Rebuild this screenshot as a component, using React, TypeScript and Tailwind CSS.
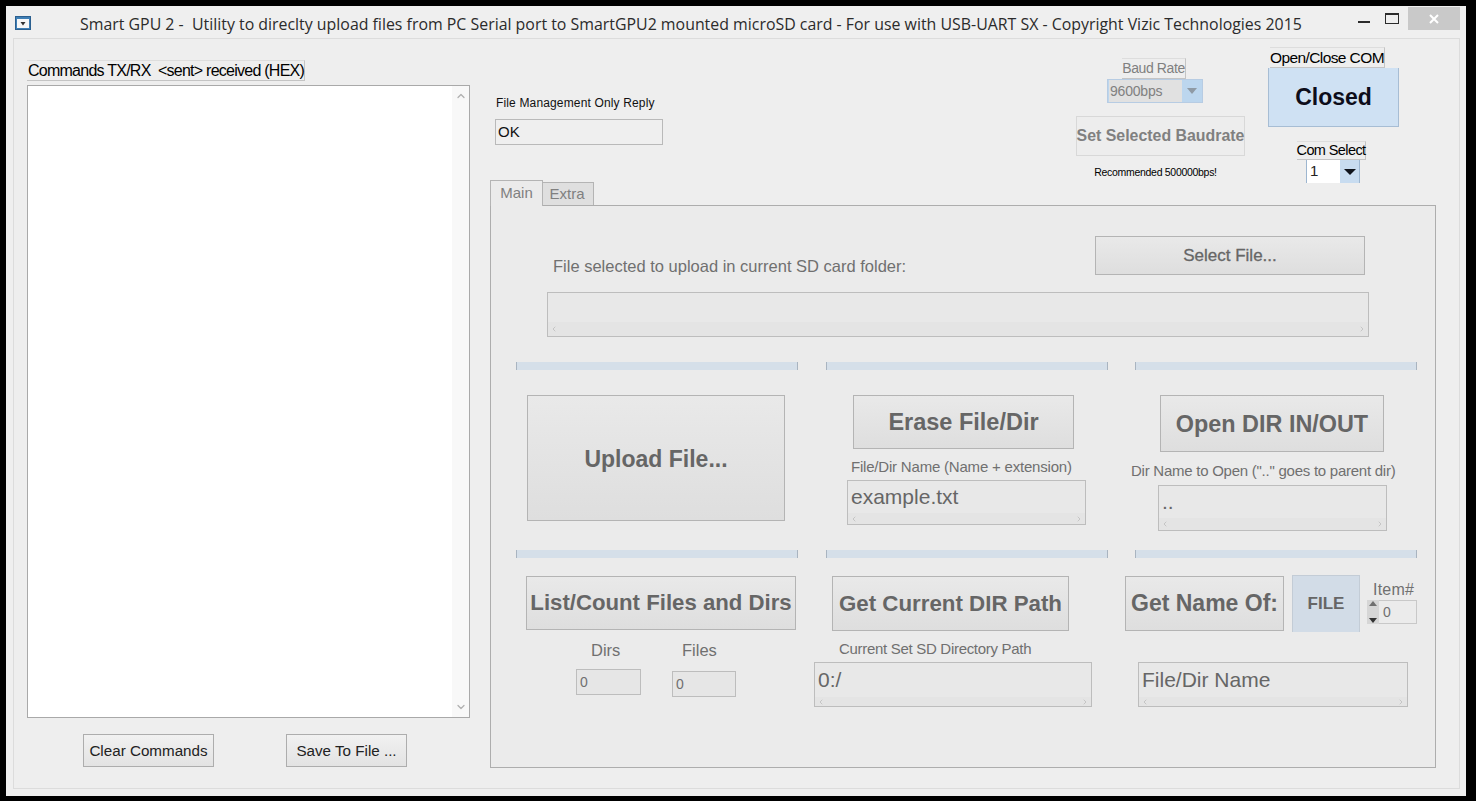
import React from "react";
import { ChevronLeft, ChevronRight, ChevronUp, ChevronDown } from "lucide-react";

const FONT = "font-['Liberation_Sans',Arial,sans-serif]";

function Btn({ className, children }: { className: string; children: React.ReactNode }) {
  return (
    <div className={`flex items-center justify-center whitespace-nowrap font-bold text-[#666666] border border-[#b4b4b4] bg-gradient-to-b from-[#e9e9e9] to-[#dedede] ${className}`}>
      {children}
    </div>
  );
}

function ScrollBox({ className, textClass, text }: { className: string; textClass: string; text?: string }) {
  return (
    <div className={`flex flex-col border border-[#bdbdbd] bg-[#e8e8e8] ${className}`}>
      <div className={`flex-1 px-[3px] whitespace-nowrap text-[#666666] ${textClass}`}>{text}</div>
      <div className="flex h-[14px] items-center justify-between bg-[#e4e4e4] px-[2px] text-[#b5b5b5]">
        <ChevronLeft size={8} strokeWidth={2} />
        <ChevronRight size={8} strokeWidth={2} />
      </div>
    </div>
  );
}

function Separator() {
  return <div className="h-[8px] w-[282px] border-x border-[#a9b4c0] bg-[#d5dfe9]" />;
}

function Tag({ className, children }: { className: string; children: React.ReactNode }) {
  return (
    <div className={`flex items-center justify-center whitespace-nowrap border-t border-t-[#dddddd] border-r border-b border-[#c4c4c4] text-black ${className}`}>
      {children}
    </div>
  );
}

export default function App() {
  return (
    <div className={`h-[801px] w-[1476px] overflow-hidden bg-black pl-[6px] pt-[6px] ${FONT}`}>
      <div className="h-[790px] w-[1460px] bg-[#efefef]">
        {/* Title bar */}
        <div className="flex h-[32px] items-start">
          <svg className="ml-[9px] mt-[10px]" width="16" height="14" viewBox="0 0 16 14">
            <rect x="0.5" y="0.5" width="15" height="13" fill="#3f7fb5" stroke="#2b5f8f" />
            <rect x="2" y="3" width="12" height="9" fill="#f7f7f7" />
            <path d="M5.5 6 L10.5 6 L8 9.5 Z" fill="#333333" />
          </svg>
          <div className="ml-[49px] mt-[8px] whitespace-nowrap font-['Open_Sans',sans-serif] text-[15.9px] leading-[20px] text-[#2b2b2b]">
            Smart GPU 2 -&nbsp; Utility to direclty upload files from PC Serial port to SmartGPU2 mounted microSD card - For use with USB-UART SX - Copyright Vizic Technologies 2015
          </div>
          <div className="ml-auto flex items-start">
            <div className="mt-[15px] h-[2px] w-[12px] bg-[#2b2b2b]" />
            <div className="ml-[15px] mt-[7px] h-[11px] w-[14px] border border-t-2 border-[#2b2b2b]" />
            <div className="ml-[9px] mt-[1px] flex h-[23px] w-[52px] items-center justify-center bg-[#c9c9c9]">
              <svg width="10" height="10" viewBox="0 0 10 10">
                <path d="M1 1 L9 9 M9 1 L1 9" stroke="#ffffff" strokeWidth="2" />
              </svg>
            </div>
            <div className="w-[6px]" />
          </div>
        </div>

        {/* Form */}
        <div className="ml-[7px] flex h-[751px] w-[1447px] border border-[#dcdcdc] bg-[#eeeeee]">
          {/* Commands column */}
          <div className="ml-[13px] w-[443px]">
            <Tag className="mt-[21px] h-[21px] w-[278px] justify-start pt-[1px] pl-[1px] text-[16px] tracking-[-0.75px]">
              Commands TX/RX&nbsp; &lt;sent&gt; received (HEX)
            </Tag>
            <div className="mt-[4px] flex h-[633px] justify-end border border-[#a9a9a9] bg-white">
              <div className="flex w-[17px] flex-col items-center justify-between bg-[#f8f8f8] py-[4px] text-[#b0b0b0]">
                <ChevronUp size={12} strokeWidth={2.5} />
                <ChevronDown size={12} strokeWidth={2.5} />
              </div>
            </div>
            <div className="mt-[16px] flex pl-[56px] text-[15.2px] text-[#222222]">
              <div className="flex h-[33px] w-[131px] items-center justify-center border border-[#adadad] bg-gradient-to-b from-[#f1f1f1] to-[#e3e3e3] pt-[2px]">Clear Commands</div>
              <div className="ml-[72px] flex h-[33px] w-[121px] items-center justify-center border border-[#adadad] bg-gradient-to-b from-[#f1f1f1] to-[#e3e3e3] pt-[2px]">Save To File ...</div>
            </div>
          </div>

          {/* Right side */}
          <div className="ml-[20px] w-[946px]">
            <div className="flex h-[141px]">
              <div className="ml-[5px] w-[168px] pt-[56px]">
                <div className="ml-[1px] whitespace-nowrap text-[12px] leading-[16px] tracking-[0.15px] text-[#111111]">File Management Only Reply</div>
                <div className="mt-[8px] flex h-[26px] items-center border border-[#b9b9b9] bg-[#efefef] px-[2px] text-[15px] text-[#111111]">OK</div>
              </div>

              <div className="ml-[413px] flex w-[169px] flex-col pt-[19px]">
                <Tag className="ml-[46px] h-[21px] w-[64px] text-[14px] tracking-[-0.4px] !text-[#808080]">Baud Rate</Tag>
                <div className="ml-[31px] flex h-[24px] w-[96px] items-center border border-[#b7cce3] bg-[#bcd6ee] pl-[1px]">
                  <div className="flex h-full flex-1 items-center bg-[#e1e1e1] pl-[1px] text-[14px] tracking-[-0.2px] text-[#808080]">9600bps</div>
                  <svg className="mx-[5px]" width="10" height="6" viewBox="0 0 10 6"><path d="M0 0 L10 0 L5 6 Z" fill="#8f9aa5" /></svg>
                </div>
                <Btn className="mt-[13px] h-[40px] w-[169px] !border-[#d8d8d8] !bg-none bg-[#ededed] text-[15.9px] !text-[#808080]">Set Selected Baudrate</Btn>
                <div className="mt-[9px] whitespace-nowrap pr-[10px] text-center text-[10.5px] leading-[14px] tracking-[-0.3px] text-black">Recommended 500000bps!</div>
              </div>

              <div className="ml-[23px] w-[131px] pt-[8px]">
                <Tag className="ml-[2px] h-[21px] w-[115px] text-[15.5px] tracking-[-0.6px]">Open/Close COM</Tag>
                <div className="flex h-[59px] items-center justify-center border-x border-b border-[#a7bdd4] bg-[#cfe1f3] text-[23px] font-bold text-[#0d0d1a]">Closed</div>
                <Tag className="ml-[29px] mt-[14px] h-[19px] w-[69px] text-[14.5px] tracking-[-0.6px]">Com Select</Tag>
                <div className="ml-[38px] flex h-[23px] w-[54px] items-center border-x border-[#9db6d0] bg-[#c8dcf0]">
                  <div className="flex h-full w-[33px] items-center bg-white pl-[3px] text-[15px] text-[#222222]">1</div>
                  <svg className="ml-[4px]" width="12" height="6" viewBox="0 0 12 6"><path d="M0 0 L12 0 L6 6 Z" fill="#10141c" /></svg>
                </div>
              </div>
            </div>

            {/* Tabs */}
            <div className="flex h-[25px] items-end text-[15px] text-[#808080]">
              <div className="relative z-10 -mb-[1px] flex h-[26px] w-[53px] items-center justify-center border border-b-0 border-[#b4b4b4] bg-[#ebebeb]">Main</div>
              <div className="flex h-[23px] w-[51px] items-center justify-center border border-l-0 border-b-0 border-[#b4b4b4] bg-[#dfdfdf] pr-[2px]">Extra</div>
            </div>

            <div className="h-[563px] border border-[#adadad] bg-[#ebebeb]">
              <div className="flex h-[69px] items-start pt-[30px]">
                <div className="ml-[62px] mt-[21px] w-[353px] whitespace-nowrap text-[16.5px] leading-[18px] text-[#707070]">File selected to upload in current SD card folder:</div>
                <Btn className="ml-[189px] h-[39px] w-[270px] text-[17px] !font-normal [-webkit-text-stroke:0.3px_#666666]">Select File...</Btn>
              </div>
              <ScrollBox className="ml-[56px] mt-[17px] h-[45px] w-[822px]" textClass="" />

              <div className="ml-[25px] mt-[25px] flex">
                {/* Upload / List */}
                <div className="w-[282px]">
                  <div className="h-[188px]">
                    <Separator />
                    <Btn className="ml-[11px] mt-[25px] h-[126px] w-[258px] pt-[2px] text-[23px]">Upload File...</Btn>
                  </div>
                  <Separator />
                  <Btn className="ml-[10px] mt-[18px] h-[54px] w-[270px] text-[22.2px]">List/Count Files and Dirs</Btn>
                  <div className="mt-[11px] flex">
                    <div className="ml-[60px] w-[65px]">
                      <div className="ml-[15px] text-[16.5px] leading-[18px] text-[#707070]">Dirs</div>
                      <div className="mt-[10px] flex h-[26px] items-center border border-[#bdbdbd] bg-[#e6e6e6] px-[3px] text-[14px] text-[#707070]">0</div>
                    </div>
                    <div className="ml-[31px] w-[64px]">
                      <div className="ml-[10px] text-[16.5px] leading-[18px] text-[#707070]">Files</div>
                      <div className="mt-[12px] flex h-[26px] items-center border border-[#bdbdbd] bg-[#e6e6e6] px-[3px] text-[14px] text-[#707070]">0</div>
                    </div>
                  </div>
                </div>

                {/* Erase / Current DIR */}
                <div className="ml-[28px] w-[282px]">
                  <div className="h-[188px]">
                    <Separator />
                    <Btn className="ml-[27px] mt-[25px] h-[54px] w-[221px] pt-[2px] text-[23.5px]">Erase File/Dir</Btn>
                    <div className="ml-[25px] mt-[9px] whitespace-nowrap text-[15px] leading-[18px] tracking-[-0.2px] text-[#707070]">File/Dir Name (Name + extension)</div>
                    <ScrollBox className="ml-[21px] mt-[4px] h-[45px] w-[239px]" textClass="text-[21px] leading-[32px]" text="example.txt" />
                  </div>
                  <Separator />
                  <Btn className="ml-[6px] mt-[18px] h-[55px] w-[237px] text-[22.3px]">Get Current DIR Path</Btn>
                  <div className="ml-[13px] mt-[9px] whitespace-nowrap text-[15px] leading-[18px] tracking-[-0.3px] text-[#707070]">Current Set SD Directory Path</div>
                  <ScrollBox className="-ml-[12px] mt-[4px] h-[45px] w-[278px]" textClass="text-[21px] leading-[34px]" text="0:/" />
                </div>

                {/* Open DIR / Get Name */}
                <div className="ml-[27px] w-[282px]">
                  <div className="h-[188px]">
                    <Separator />
                    <Btn className="ml-[25px] mt-[25px] h-[57px] w-[224px] pt-[2px] text-[23.4px]">Open DIR IN/OUT</Btn>
                    <div className="-ml-[4px] mt-[10px] whitespace-nowrap text-[15px] leading-[18px] tracking-[-0.25px] text-[#707070]">Dir Name to Open (".." goes to parent dir)</div>
                    <ScrollBox className="ml-[23px] mt-[5px] h-[46px] w-[229px]" textClass="text-[21px] leading-[32px]" text=".." />
                  </div>
                  <Separator />
                  <div className="-ml-[10px] mt-[17px] flex items-start">
                    <Btn className="mt-[1px] h-[55px] w-[159px] text-[23px]">Get Name Of:</Btn>
                    <div className="ml-[8px] flex h-[57px] w-[68px] items-center justify-center border-x border-t border-[#c3ccd6] bg-[#d2dce7] text-[17px] font-bold text-[#666666]">FILE</div>
                    <div className="ml-[7px] w-[50px]">
                      <div className="mt-[6px] whitespace-nowrap pl-[6px] text-[16px] leading-[18px] tracking-[0.2px] text-[#707070]">Item#</div>
                      <div className="mt-[1px] flex h-[24px]">
                        <div className="flex w-[12px] flex-col items-center justify-between bg-[#d6d6d6] py-[1px]">
                          <svg width="8" height="5" viewBox="0 0 8 5"><path d="M0 5 L8 5 L4 0 Z" fill="#707070" /></svg>
                          <svg width="8" height="5" viewBox="0 0 8 5"><path d="M0 0 L8 0 L4 5 Z" fill="#333333" /></svg>
                        </div>
                        <div className="flex flex-1 items-center border border-l-0 border-[#c8c8c8] bg-[#ebebeb] pl-[4px] text-[14px] text-[#707070]">0</div>
                      </div>
                    </div>
                  </div>
                  <ScrollBox className="ml-[3px] mt-[30px] h-[45px] w-[270px]" textClass="text-[21px] leading-[34px]" text="File/Dir Name" />
                </div>
              </div>
            </div>
          </div>
        </div>
      </div>
    </div>
  );
}
